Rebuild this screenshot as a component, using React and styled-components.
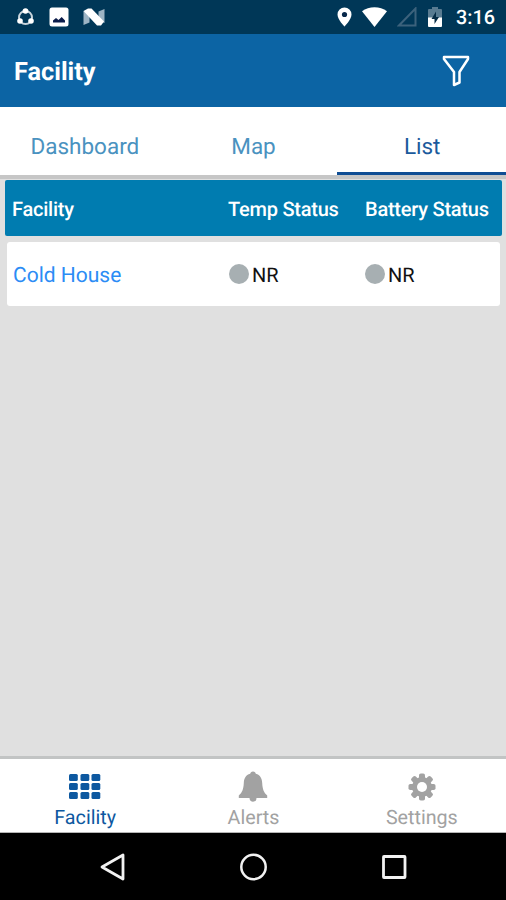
import React, { useState } from 'react';
import styled, { createGlobalStyle } from 'styled-components';

const GlobalStyle = createGlobalStyle`
  * {
    box-sizing: border-box;
  }

  body {
    margin: 0;
    font-family: Roboto, 'Liberation Sans', sans-serif;
    text-rendering: geometricPrecision;
  }

  button {
    padding: 0;
    border: 0;
    background: none;
    font-family: inherit;
    text-rendering: inherit;
    cursor: pointer;
  }

  svg {
    display: block;
    flex: none;
  }
`;

const Screen = styled.div`
  display: flex;
  flex-direction: column;
  width: 506px;
  height: 900px;
  overflow: hidden;
  background: #e0e0e0;
`;

const StatusBar = styled.div`
  display: flex;
  flex: none;
  align-items: center;
  justify-content: space-between;
  height: 34px;
  padding: 0 11px 0 16px;
  background: #003757;
`;

const StatusGroup = styled.div`
  display: flex;
  align-items: center;
  gap: ${({ $gap }) => $gap}px;
`;

const Clock = styled.span`
  width: 39px;
  margin-left: 4px;
  padding-top: 2px;
  color: #fff;
  font-size: 19.8px;
  font-weight: 500;
  line-height: 32px;
  white-space: nowrap;
`;

const Header = styled.header`
  display: flex;
  flex: none;
  align-items: center;
  justify-content: space-between;
  height: 73px;
  padding: 0 36px 0 14px;
  background: #0c64a4;
`;

const Title = styled.h1`
  margin: 5px 0 0;
  color: #fff;
  font-size: 25.3px;
  font-weight: 700;
  line-height: 30px;
`;

const Tabs = styled.nav`
  display: flex;
  flex: none;
  height: 72px;
  background: #fff;
  border-bottom: 4px solid #c6c6c6;
`;

const Tab = styled.button`
  flex: 1;
  height: 68px;
  padding: 15px 0 0 1px;
  border-bottom: 3px solid ${({ $active }) => ($active ? '#0f4d94' : '#fff')};
  color: ${({ $active }) => ($active ? '#1b5a9c' : '#4a92c0')};
  font-size: 22.5px;
  font-weight: 400;
`;

const Content = styled.main`
  flex: 1;
  padding: 1px 4px 0 5px;
`;

const TableHead = styled.div`
  display: grid;
  grid-template-columns: 216px 137px 1fr;
  align-items: center;
  height: 56px;
  padding: 2px 0 0 7px;
  border-radius: 2px;
  background: #007cb0;
  color: #fff;
  font-size: 20px;
  font-weight: 500;
  letter-spacing: -0.24px;
  white-space: nowrap;
`;

const TableRow = styled.div`
  display: grid;
  grid-template-columns: 216px 136px 1fr;
  align-items: center;
  height: 64px;
  margin: 6px 2px 0;
  padding: 2px 0 0 6px;
  border-radius: 3px;
  background: #fff;
`;

const FacilityLink = styled.a`
  padding-top: 1px;
  color: #2b8cf5;
  font-size: 21px;
  line-height: 26px;
`;

const Status = styled.span`
  display: flex;
  align-items: center;
  gap: 3px;
  color: #111;
  font-size: 20px;
  line-height: 26px;
`;

const Dot = styled.span`
  width: 20px;
  height: 20px;
  margin-bottom: 2px;
  border-radius: 50%;
  background: #a7afb2;
`;

const BottomBar = styled.nav`
  display: flex;
  flex: none;
  height: 77px;
  padding-left: 1px;
  background: #fff;
  border-top: 3px solid #c2c4c4;
  border-bottom: 1px solid #b5b5b5;
`;

const BottomItem = styled.button`
  display: flex;
  flex: 1;
  flex-direction: column;
  align-items: center;
  padding-top: 12px;
  color: ${({ $active }) => ($active ? '#0d58a0' : '#a2a2a2')};
  font-size: 19.7px;
  line-height: 24px;
`;

const BottomLabel = styled.span`
  margin-top: 3px;
`;

const SystemBar = styled.div`
  display: flex;
  flex: none;
  align-items: center;
  justify-content: center;
  gap: 112px;
  height: 67px;
  padding-left: 1px;
  background: #000;
`;

const ShareIcon = () => (
  <svg width="19" height="20" viewBox="0 0 19 20" fill="none">
    <circle cx="9.5" cy="10.5" r="6.5" stroke="#c8d4dc" strokeWidth="2" />
    <circle cx="9.5" cy="4" r="2.8" fill="#fff" />
    <circle cx="4" cy="14" r="2.8" fill="#fff" />
    <circle cx="15" cy="14" r="2.8" fill="#fff" />
  </svg>
);

const PhotoIcon = () => (
  <svg width="20" height="20" viewBox="0 0 20 20">
    <rect x="0.5" y="0.5" width="19" height="19" rx="2.5" fill="#fff" />
    <path d="M4 15.5V13.5L7 11l2.5 2 3.2-3 3.3 3.5v2z" fill="#0b1c4a" />
  </svg>
);

const NougatIcon = () => (
  <svg width="22" height="18" viewBox="0 0 22 18">
    <path d="M0.5 3v14l6-2.5V5zM21.5 1v14l-6-2.5V3.5z" fill="#9db4c4" />
    <path d="M0.5 3 5 0.5h3.5L21 13.5 18 17.5h-4z" fill="#fff" />
  </svg>
);

const PinIcon = () => (
  <svg width="15" height="20" viewBox="0 0 15 20">
    <path
      d="M7.5 0.5a7 7 0 0 0-7 7c0 5 7 12 7 12s7-7 7-12a7 7 0 0 0-7-7z"
      fill="#fff"
    />
    <circle cx="7.5" cy="7.5" r="2.6" fill="#07284a" />
  </svg>
);

const WifiIcon = () => (
  <svg width="25" height="20" viewBox="0 0 25 20">
    <path d="M0 4.3C7-1.1 18-1.1 25 4.3L12.5 20z" fill="#fff" />
  </svg>
);

const SignalIcon = () => (
  <svg width="21" height="20" viewBox="0 0 21 20" fill="none">
    <path d="M2 18.5h16.500V1.500z" stroke="#3c627c" strokeWidth="2" />
  </svg>
);

const BatteryIcon = () => (
  <svg width="14" height="20" viewBox="0 0 14 20">
    <path d="M0 3q0-1 1-1h3V0h6v2h3q1 0 1 1v8H0z" fill="#587b91" />
    <path d="M0 10.5h14V19q0 1-1 1H1q-1 0-1-1z" fill="#fff" />
    <path d="M8 4.5 3.5 12h3v5l4.500-7H8z" fill="#062c46" />
  </svg>
);

const FilterIcon = () => (
  <svg width="28" height="32" viewBox="0 0 28 32" fill="none">
    <path
      d="M2 2h24v2L17.5 17v10.5L12 30V17L2 4z"
      stroke="#fff"
      strokeWidth="2.5"
      strokeLinejoin="round"
    />
  </svg>
);

const GridIcon = () => (
  <svg width="32" height="26" viewBox="0 0 32 26" fill="currentColor">
    {[0, 9, 18].map(y =>
      [0, 11.5, 22.5].map(x => (
        <rect key={`${x}-${y}`} x={x} y={y} width="8.8" height="7" rx="1.5" />
      ))
    )}
  </svg>
);

const BellIcon = () => (
  <svg width="30" height="32" viewBox="0 0 30 32" fill="currentColor">
    <path d="M15 0.5c-1.7 0-2.6 1-2.8 2.3C7.6 4 6 7.6 5.8 12c-.3 6-1.5 9.5-5 12.5V27H12a3 3 0 0 0 6 0h11.2v-2.5c-3.5-3-4.7-6.5-5-12.5C24 7.600 22.4 4 17.8 2.8 17.6 1.5 16.7.5 15 .5z" />
    <path d="M11.5 27h7c0 5-7 5-7 0z" />
  </svg>
);

const GearIcon = () => (
  <svg width="28" height="28" viewBox="0 0 28 28">
    <g fill="currentColor">
      {[0, 45, 90, 135].map(angle => (
        <rect
          key={angle}
          x="11"
          y="0.5"
          width="6"
          height="27"
          rx="1.8"
          transform={`rotate(${angle} 14 14)`}
        />
      ))}
      <circle cx="14" cy="14" r="10" />
    </g>
    <circle cx="14" cy="14" r="5" fill="#fff" />
  </svg>
);

const BackIcon = () => (
  <svg width="28" height="30" viewBox="0 0 28 30" fill="none">
    <path
      d="M23 3v24L2 15z"
      stroke="#f2f2f2"
      strokeWidth="2.8"
      strokeLinejoin="round"
    />
  </svg>
);

const HomeIcon = () => (
  <svg width="28" height="28" viewBox="0 0 28 28" fill="none">
    <circle cx="13.5" cy="14" r="12.2" stroke="#f2f2f2" strokeWidth="2.5" />
  </svg>
);

const RecentsIcon = () => (
  <svg width="28" height="28" viewBox="0 0 28 28" fill="none">
    <rect
      x="3.5"
      y="3.5"
      width="21.5"
      height="21"
      rx="0.5"
      stroke="#f2f2f2"
      strokeWidth="2.8"
    />
  </svg>
);

const tabs = ['Dashboard', 'Map', 'List'];

const facilities = [{ id: 1, name: 'Cold House', temp: 'NR', battery: 'NR' }];

const sections = [
  { name: 'Facility', Icon: GridIcon },
  { name: 'Alerts', Icon: BellIcon },
  { name: 'Settings', Icon: GearIcon },
];

const IconSlot = styled.span`
  display: flex;
  align-items: center;
  height: 32px;
`;

const App = () => {
  const [activeTab, setActiveTab] = useState('List');
  const [section, setSection] = useState('Facility');

  return (
    <Screen>
      <GlobalStyle />
      <StatusBar>
        <StatusGroup $gap={14}>
          <ShareIcon />
          <PhotoIcon />
          <NougatIcon />
        </StatusGroup>
        <StatusGroup $gap={10}>
          <PinIcon />
          <WifiIcon />
          <SignalIcon />
          <BatteryIcon />
          <Clock>3:16</Clock>
        </StatusGroup>
      </StatusBar>

      <Header>
        <Title>Facility</Title>
        <button aria-label="Filter">
          <FilterIcon />
        </button>
      </Header>

      <Tabs>
        {tabs.map(tab => (
          <Tab
            key={tab}
            $active={tab === activeTab}
            onClick={() => setActiveTab(tab)}
          >
            {tab}
          </Tab>
        ))}
      </Tabs>

      <Content>
        <TableHead>
          <span>Facility</span>
          <span>Temp Status</span>
          <span>Battery Status</span>
        </TableHead>
        {facilities.map(({ id, name, temp, battery }) => (
          <TableRow key={id}>
            <FacilityLink>{name}</FacilityLink>
            <Status>
              <Dot />
              {temp}
            </Status>
            <Status>
              <Dot />
              {battery}
            </Status>
          </TableRow>
        ))}
      </Content>

      <BottomBar>
        {sections.map(({ name, Icon }) => (
          <BottomItem
            key={name}
            $active={name === section}
            onClick={() => setSection(name)}
          >
            <IconSlot>
              <Icon />
            </IconSlot>
            <BottomLabel>{name}</BottomLabel>
          </BottomItem>
        ))}
      </BottomBar>

      <SystemBar>
        <BackIcon />
        <HomeIcon />
        <RecentsIcon />
      </SystemBar>
    </Screen>
  );
};

export default App;
